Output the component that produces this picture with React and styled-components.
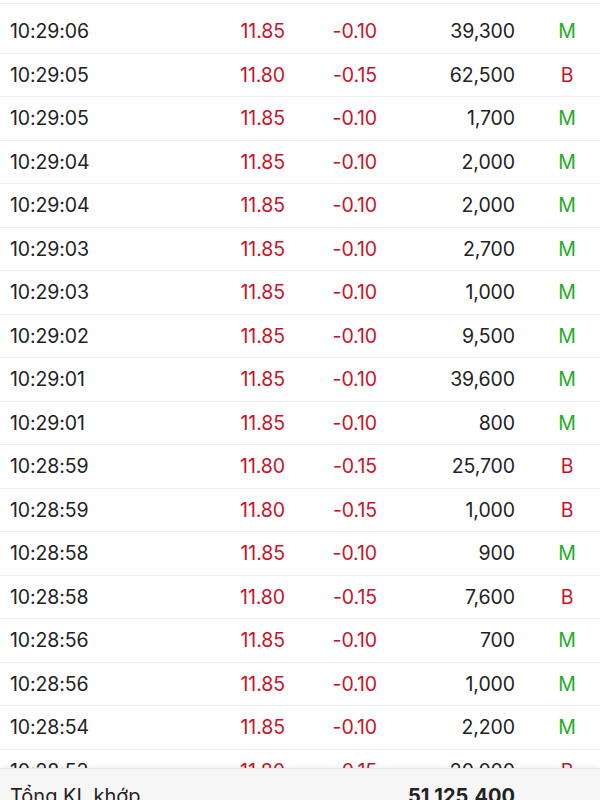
import styled, { createGlobalStyle } from 'styled-components';

const GlobalStyle = createGlobalStyle`
  html, body {
    margin: 0;
    padding: 0;
    background: #fff;
  }
  body {
    font-family: Inter, "Noto Sans", "Liberation Sans", sans-serif;
    color: #222;
  }
`;

const Page = styled.div`
  width: 600px;
  height: 800px;
  display: flex;
  flex-direction: column;
  overflow: hidden;
  background: #fff;
`;

const List = styled.div`
  flex: none;
  height: 768px;
  overflow: hidden;
`;

const TopEdge = styled.div`
  height: 3px;
  border-bottom: 1px solid #ececec;
  margin-bottom: 6px;
`;

const Row = styled.div`
  box-sizing: border-box;
  height: 43.5px;
  display: grid;
  grid-template-columns: 185px 90px 92px 138px 1fr;
  align-items: center;
  padding-left: 10px;
  border-bottom: 1px solid #efefef;
  font-size: 19.5px;
  letter-spacing: -0.1px;
`;

const Time = styled.span`
  color: #222;
`;

const Num = styled.span`
  text-align: right;
  color: ${(p) => (p.$red ? '#c8142a' : '#222')};
`;

const Side = styled.span`
  text-align: center;
  padding-left: 19px;
  color: ${(p) => (p.$buy ? '#1ead24' : '#c8142a')};
`;

const Footer = styled.div`
  flex: none;
  box-sizing: border-box;
  height: 54px;
  display: grid;
  grid-template-columns: 367px 138px 1fr;
  align-items: center;
  padding-left: 10px;
  background: #f6f6f6;
  border-top: 1px solid #e6e6e6;
  box-shadow: 0 -2px 5px rgba(0, 0, 0, 0.05);
  font-size: 20px;
  position: relative;
`;

const Label = styled.span`
  color: #222;
`;

const Total = styled.span`
  text-align: right;
  font-weight: 700;
  color: #222;
`;

const trades = [
  ['10:29:06', '11.80', '-0.10', '39,300', 'M'],
  ['10:29:05', '11.80', '-0.15', '62,500', 'B'],
  ['10:29:05', '11.85', '-0.10', '1,700', 'M'],
  ['10:29:04', '11.85', '-0.10', '2,000', 'M'],
  ['10:29:04', '11.85', '-0.10', '2,000', 'M'],
  ['10:29:03', '11.85', '-0.10', '2,700', 'M'],
  ['10:29:03', '11.85', '-0.10', '1,000', 'M'],
  ['10:29:02', '11.85', '-0.10', '9,500', 'M'],
  ['10:29:01', '11.85', '-0.10', '39,600', 'M'],
  ['10:29:01', '11.85', '-0.10', '800', 'M'],
  ['10:28:59', '11.80', '-0.15', '25,700', 'B'],
  ['10:28:59', '11.80', '-0.15', '1,000', 'B'],
  ['10:28:58', '11.85', '-0.10', '900', 'M'],
  ['10:28:58', '11.80', '-0.15', '7,600', 'B'],
  ['10:28:56', '11.85', '-0.10', '700', 'M'],
  ['10:28:56', '11.85', '-0.10', '1,000', 'M'],
  ['10:28:54', '11.85', '-0.10', '2,200', 'M'],
  ['10:28:53', '11.80', '-0.15', '20,000', 'B'],
  ['10:28:52', '11.85', '-0.10', '1,500', 'M'],
];
trades[0][1] = '11.85';

export default function App() {
  return (
    <Page>
      <GlobalStyle />
      <List>
        <TopEdge />
        {trades.map(([time, price, change, vol, side], i) => (
          <Row key={i}>
            <Time>{time}</Time>
            <Num $red>{price}</Num>
            <Num $red>{change}</Num>
            <Num>{vol}</Num>
            <Side $buy={side === 'M'}>{side}</Side>
          </Row>
        ))}
      </List>
      <Footer>
        <Label>Tổng KL khớp</Label>
        <Total>51,125,400</Total>
      </Footer>
    </Page>
  );
}
